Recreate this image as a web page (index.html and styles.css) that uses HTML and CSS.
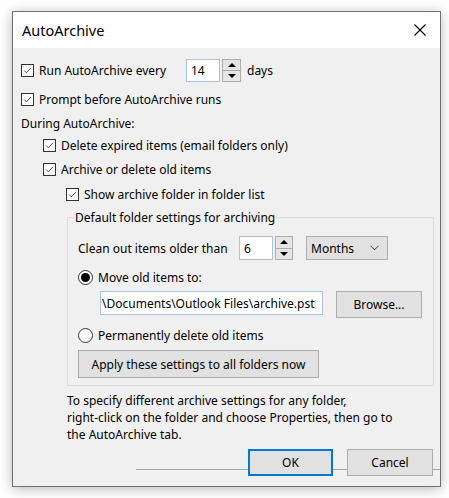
FILE: index.html
```html
<!DOCTYPE html>
<html>
<head>
<meta charset="utf-8">
<link rel="stylesheet" href="styles.css">
</head>
<body>
<div class="dialog">
  <div class="titlebar">
    <span class="title">AutoArchive</span>
    <svg class="close" width="12" height="12" viewBox="0 0 12 12"><path d="M0.5 0.5 L11.5 11.5 M11.5 0.5 L0.5 11.5" stroke="#000" stroke-width="1.1" fill="none"/></svg>
  </div>
  <div class="content">
    <div class="row row-spin">
      <span class="cb checked"><svg viewBox="0 0 13 13"><path d="M2.5 6.5 L5.2 9.2 L10.5 3.5" stroke="#444" stroke-width="1.1" fill="none"/></svg></span>
      <span class="lbl lbl-every">Run AutoArchive every</span>
      <span class="textbox tb-days">14</span>
      <span class="spin"><span class="sb"><i class="up"></i></span><span class="sb"><i class="down"></i></span></span>
      <span class="after">days</span>
    </div>
    <div class="row r2">
      <span class="cb checked"><svg viewBox="0 0 13 13"><path d="M2.5 6.5 L5.2 9.2 L10.5 3.5" stroke="#444" stroke-width="1.1" fill="none"/></svg></span>
      <span class="lbl">Prompt before AutoArchive runs</span>
    </div>
    <div class="row r3"><span class="plain">During AutoArchive:</span></div>
    <div class="row r4 ind1">
      <span class="cb checked"><svg viewBox="0 0 13 13"><path d="M2.5 6.5 L5.2 9.2 L10.5 3.5" stroke="#444" stroke-width="1.1" fill="none"/></svg></span>
      <span class="lbl">Delete expired items (email folders only)</span>
    </div>
    <div class="row r5 ind1">
      <span class="cb checked"><svg viewBox="0 0 13 13"><path d="M2.5 6.5 L5.2 9.2 L10.5 3.5" stroke="#444" stroke-width="1.1" fill="none"/></svg></span>
      <span class="lbl">Archive or delete old items</span>
    </div>
    <div class="row r6 ind2">
      <span class="cb checked"><svg viewBox="0 0 13 13"><path d="M2.5 6.5 L5.2 9.2 L10.5 3.5" stroke="#444" stroke-width="1.1" fill="none"/></svg></span>
      <span class="lbl">Show archive folder in folder list</span>
    </div>
    <fieldset class="group">
      <legend>Default folder settings for archiving</legend>
      <div class="row g1">
        <span class="lbl lbl-clean">Clean out items older than</span>
        <span class="textbox tb-age">6</span>
        <span class="spin spin2"><span class="sb"><i class="up"></i></span><span class="sb"><i class="down"></i></span></span>
        <span class="combo">Months<svg width="9" height="6" viewBox="0 0 9 6"><path d="M0.5 0.8 L4.5 4.8 L8.5 0.8" stroke="#444" stroke-width="1" fill="none"/></svg></span>
      </div>
      <div class="row g2">
        <span class="radio on"><span class="dot"></span></span>
        <span class="lbl">Move old items to:</span>
      </div>
      <div class="row g3">
        <span class="textbox tb-path">\Documents\Outlook Files\archive.pst</span>
        <span class="btn btn-browse">Browse...</span>
      </div>
      <div class="row g4">
        <span class="radio"></span>
        <span class="lbl">Permanently delete old items</span>
      </div>
      <div class="row g5">
        <span class="btn btn-apply">Apply these settings to all folders now</span>
      </div>
    </fieldset>
    <p class="note">To specify different archive settings for any folder,<br>right-click on the folder and choose Properties, then go to<br>the AutoArchive tab.</p>
    <div class="buttons">
      <span class="btn btn-ok">OK</span>
      <span class="btn btn-cancel">Cancel</span>
    </div>
  </div>
</div>
</body>
</html>
```
FILE: styles.css
```css
* { box-sizing: border-box; }
html, body { margin: 0; padding: 0; }
body {
  background: #ffffff;
  font-family: "Noto Sans", "Open Sans", "DejaVu Sans", sans-serif;
  font-size: 12px;
  color: #000;
  width: 449px;
  height: 498px;
  overflow: hidden;
}
.dialog {
  margin: 11px 0 0 12px;
  width: 429px;
  height: 476px;
  border: 1px solid #6f6f6f;
  background: #f0f0f0;
  box-shadow: 0 2px 12px rgba(0,0,0,0.28);
  display: flex;
  flex-direction: column;
}
.titlebar {
  height: 36px;
  background: #ffffff;
  display: flex;
  align-items: center;
  justify-content: space-between;
  padding: 0 14px 0 9px;
  flex: none;
}
.title { font-size: 14.5px; }
.close { display: block; margin-top: -1px; }
.content {
  padding: 11px 7px 0 8px;
  display: flex;
  flex-direction: column;
  flex: 1;
}
.row { display: flex; align-items: center; height: 18px; }
.row-spin { height: 23px; }
.r2 { margin-top: 8px; }
.r3 { margin-top: 6px; }
.r4 { margin-top: 4px; }
.r5 { margin-top: 6px; }
.r6 { margin-top: 7px; }
.ind1 { padding-left: 22px; }
.ind2 { padding-left: 45px; }
.plain { padding-left: 0; }
.cb {
  width: 13px; height: 13px;
  border: 1px solid #333;
  background: #fff;
  flex: none;
  margin-right: 5px;
  display: block;
}
.cb svg { display: block; width: 11px; height: 11px; }
.lbl { white-space: nowrap; }
.lbl-every { width: 147px; }
.textbox {
  background: #fff;
  border: 1px solid #a9c4df;
  height: 23px;
  display: flex;
  align-items: center;
  padding-left: 4px;
  white-space: nowrap;
  overflow: hidden;
}
.tb-days { width: 34px; }
.spin {
  display: flex; flex-direction: column;
  width: 19px; height: 23px;
  margin-left: 2px;
  border: 1px solid #adadad;
  background: #e5e5e5;
}
.sb { flex: 1; display: flex; align-items: center; justify-content: center; }
.sb + .sb { border-top: 1px solid #adadad; }
.up { width: 0; height: 0; border-left: 4px solid transparent; border-right: 4px solid transparent; border-bottom: 4px solid #000; }
.down { width: 0; height: 0; border-left: 4px solid transparent; border-right: 4px solid transparent; border-top: 4px solid #000; }
.after { margin-left: 6px; }
.group {
  margin: 6px 0 0 46px;
  padding: 0 0 0 10px;
  border: 1px solid #dcdcdc;
  width: 367px;
  height: 177px;
}
.group legend {
  margin-left: -4px;
  padding: 0 1px;
}
.g1 { height: 24px; margin-top: 10px; }
.lbl-clean { width: 161px; }
.tb-age { width: 34px; height: 24px; }
.spin2 { height: 24px; width: 18px; }
.combo {
  margin-left: 13px;
  width: 82px; height: 24px;
  background: #e1e1e1;
  border: 1px solid #adadad;
  display: flex; align-items: center; justify-content: space-between;
  padding: 0 8px 0 4px;
}
.g2 { margin-top: 8px; }
.radio {
  width: 15px; height: 15px;
  border: 1px solid #333;
  border-radius: 50%;
  background: #fff;
  flex: none;
  margin-right: 5px;
  display: flex; align-items: center; justify-content: center;
}
.dot { width: 9px; height: 9px; border-radius: 50%; background: #000; }
.g3 { height: 27px; margin-top: 5px; padding-left: 22px; align-items: flex-start; }
.tb-path { width: 223px; height: 24px; padding-left: 1px; }
.btn {
  background: #e1e1e1;
  border: 1px solid #adadad;
  display: flex; align-items: center; justify-content: center;
  white-space: nowrap;
}
.btn-browse { margin-left: 13px; width: 86px; height: 27px; }
.g4 { margin-top: 8px; }
.g5 { height: 28px; margin-top: 6px; }
.btn-apply { width: 241px; height: 28px; }
.note {
  margin: 6px 0 0 46px;
  line-height: 17px;
}
.buttons {
  margin-top: 6px;
  display: flex;
  justify-content: flex-end;
  gap: 14px;
  height: 27px;
  margin-right: -7px;
  padding-right: 7px;
  background: linear-gradient(#a8a8a8, #a8a8a8) no-repeat;
  background-position: 115px 20px;
  background-size: 100% 1px;
}
.btn-ok { width: 85px; height: 27px; border: 2px solid #0078d7; }
.btn-cancel { width: 86px; height: 27px; }
```
